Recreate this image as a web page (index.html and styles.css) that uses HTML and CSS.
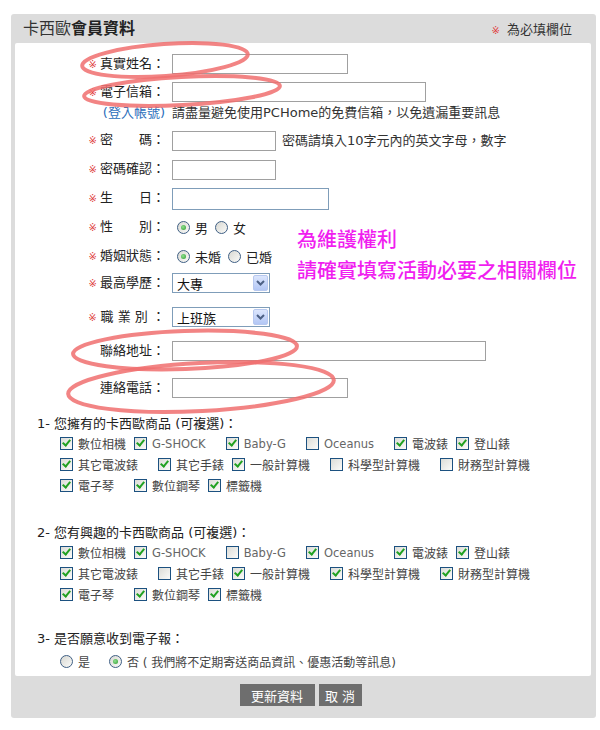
FILE: index.html
```html
<!DOCTYPE html>
<html lang="zh-Hant">
<head>
  <meta charset="UTF-8">
  <title>卡西歐會員資料</title>
  <link rel="stylesheet" href="styles.css">
</head>
<body>
  <div class="page">
    <div class="box">
      <div class="box-head">
        <h1 class="title">卡西歐<b>會員資料</b></h1>
        <span class="note-req"><span class="req">※</span> 為必填欄位</span>
      </div>

      <div class="panel">
        <div class="row r-top">
          <label class="lbl"><span class="req">※</span>真實姓名：</label>
          <input class="txt w-name" type="text">
        </div>
        <div class="row r-top">
          <label class="lbl"><span class="req">※</span>電子信箱：</label>
          <input class="txt w-mail" type="text">
        </div>
        <div class="row r-hint">
          <span class="lbl login">(登入帳號)</span>
          <span class="hint">請盡量避免使用PCHome的免費信箱，以免遺漏重要訊息</span>
        </div>
        <div class="row">
          <label class="lbl"><span class="req">※</span>密　　碼：</label>
          <input class="txt w-pass" type="password">
          <span class="hint pass-hint">密碼請填入10字元內的英文字母，數字</span>
        </div>
        <div class="row">
          <label class="lbl"><span class="req">※</span>密碼確認：</label>
          <input class="txt w-pass" type="password">
        </div>
        <div class="row">
          <label class="lbl"><span class="req">※</span>生　　日：</label>
          <input class="txt w-date" type="text">
        </div>
        <div class="row">
          <label class="lbl"><span class="req">※</span>性　　別：</label>
          <span class="choice"><span class="rd on"></span>男</span>
          <span class="choice"><span class="rd"></span>女</span>
        </div>
        <div class="row">
          <label class="lbl"><span class="req">※</span>婚姻狀態：</label>
          <span class="choice"><span class="rd on"></span>未婚</span>
          <span class="choice"><span class="rd"></span>已婚</span>
        </div>
        <div class="row r-edu">
          <label class="lbl"><span class="req">※</span>最高學歷：</label>
          <div class="sel">大專<span class="sel-btn"><svg width="9" height="6" viewBox="0 0 9 6"><path d="M1 1 L4.5 4.5 L8 1" fill="none" stroke="#4d6185" stroke-width="2"/></svg></span></div>
        </div>
        <div class="row r-job">
          <label class="lbl"><span class="req job-req">※</span>職 業 別 ：</label>
          <div class="sel">上班族<span class="sel-btn"><svg width="9" height="6" viewBox="0 0 9 6"><path d="M1 1 L4.5 4.5 L8 1" fill="none" stroke="#4d6185" stroke-width="2"/></svg></span></div>
        </div>
        <div class="row r-addr">
          <label class="lbl">聯絡地址：</label>
          <input class="txt w-addr" type="text">
        </div>
        <div class="row r-tel">
          <label class="lbl">連絡電話：</label>
          <input class="txt w-name" type="text">
        </div>

        <div class="sec sec-1">
          <h2 class="sec-title">1- 您擁有的卡西歐商品 (可複選)：</h2>
          <div class="opts">
            <div class="opt-row">
              <span class="opt"><span class="cb on"></span>數位相機</span>
              <span class="opt wide latin"><span class="cb on"></span>G-SHOCK</span>
              <span class="opt wide latin"><span class="cb on"></span>Baby-G</span>
              <span class="opt wide latin"><span class="cb"></span>Oceanus</span>
              <span class="opt"><span class="cb on"></span>電波錶</span>
              <span class="opt"><span class="cb on"></span>登山錶</span>
            </div>
            <div class="opt-row">
              <span class="opt wide"><span class="cb on"></span>其它電波錶</span>
              <span class="opt"><span class="cb on"></span>其它手錶</span>
              <span class="opt wide"><span class="cb on"></span>一般計算機</span>
              <span class="opt wide"><span class="cb"></span>科學型計算機</span>
              <span class="opt"><span class="cb"></span>財務型計算機</span>
            </div>
            <div class="opt-row">
              <span class="opt wide"><span class="cb on"></span>電子琴</span>
              <span class="opt"><span class="cb on"></span>數位鋼琴</span>
              <span class="opt"><span class="cb on"></span>標籤機</span>
            </div>
          </div>
        </div>

        <div class="sec sec-2">
          <h2 class="sec-title">2- 您有興趣的卡西歐商品 (可複選)：</h2>
          <div class="opts">
            <div class="opt-row">
              <span class="opt"><span class="cb on"></span>數位相機</span>
              <span class="opt wide latin"><span class="cb on"></span>G-SHOCK</span>
              <span class="opt wide latin"><span class="cb"></span>Baby-G</span>
              <span class="opt wide latin"><span class="cb on"></span>Oceanus</span>
              <span class="opt"><span class="cb on"></span>電波錶</span>
              <span class="opt"><span class="cb on"></span>登山錶</span>
            </div>
            <div class="opt-row">
              <span class="opt wide"><span class="cb on"></span>其它電波錶</span>
              <span class="opt"><span class="cb"></span>其它手錶</span>
              <span class="opt wide"><span class="cb on"></span>一般計算機</span>
              <span class="opt wide"><span class="cb on"></span>科學型計算機</span>
              <span class="opt"><span class="cb on"></span>財務型計算機</span>
            </div>
            <div class="opt-row">
              <span class="opt wide"><span class="cb on"></span>電子琴</span>
              <span class="opt"><span class="cb on"></span>數位鋼琴</span>
              <span class="opt"><span class="cb on"></span>標籤機</span>
            </div>
          </div>
        </div>

        <div class="sec sec-3">
          <h2 class="sec-title">3- 是否願意收到電子報：</h2>
          <div class="opts news">
            <span class="opt yes"><span class="rd"></span>是</span>
            <span class="opt"><span class="rd on"></span>否 ( 我們將不定期寄送商品資訊、優惠活動等訊息)</span>
          </div>
        </div>
      </div>

      <div class="actions">
        <button class="btn btn-save" type="button">更新資料</button>
        <button class="btn btn-cancel" type="button">取 消</button>
      </div>
    </div>

    <!-- annotations drawn over the form -->
    <svg class="marks" width="600" height="730" viewBox="0 0 600 730">
      <ellipse cx="165" cy="60" rx="83" ry="16" transform="rotate(-4 165 60)"/>
      <ellipse cx="182" cy="91" rx="98" ry="14" transform="rotate(-3 182 91)"/>
      <ellipse cx="185" cy="350" rx="112" ry="19" transform="rotate(-2 185 350)"/>
      <ellipse cx="201" cy="387" rx="133" ry="24" transform="rotate(-3 201 387)"/>
    </svg>
    <div class="callout">為維護權利<br>請確實填寫活動必要之相關欄位</div>
  </div>
</body>
</html>
```

FILE: styles.css
```css
body {
  margin: 0;
  font-family: "DejaVu Sans", "Noto Sans CJK TC", sans-serif;
  color: #222;
  background: #fff;
}

.page {
  position: relative;
  width: 600px;
  height: 730px;
  padding-top: 14px;
  box-sizing: border-box;
}

.box {
  margin-left: 11px;
  width: 585px;
  background: #dcdcdc;
  border-radius: 3px;
}

.box-head {
  display: flex;
  justify-content: space-between;
  align-items: center;
  height: 29px;
  padding: 0 24px 0 12px;
}

.title {
  margin: 0;
  font-size: 16px;
  font-weight: normal;
  line-height: 20px;
  color: #333;
}

.title b {
  font-weight: bold;
  color: #222;
}

.note-req {
  font-size: 13px;
  color: #333;
}

.req {
  color: #e03c3c;
  font-size: 10px;
  margin-right: 3px;
}

.panel {
  margin: 0 5px 0 4px;
  padding: 7px 0 5px;
  background: #fff;
  border-radius: 2px;
}

.row {
  display: flex;
  align-items: center;
  height: 29px;
  font-size: 13px;
}

.r-top { height: 28px; }
.r-hint { height: 14px; margin-bottom: 6px; }
.r-edu { height: 22px; margin-top: 1px; }
.r-job { height: 22px; margin-top: 12px; }
.r-addr { height: 22px; margin-top: 12px; }
.r-tel { height: 22px; margin-top: 15px; }

.lbl {
  width: 150px;
  margin-right: 7px;
  flex: none;
  text-align: right;
  line-height: 16px;
  color: #222;
}

.job-req {
  margin-right: 4px;
}

.login {
  color: #2a6ebb;
}

.hint {
  color: #333;
  line-height: 16px;
}

.pass-hint {
  margin-left: 6px;
}

.txt {
  height: 20px;
  box-sizing: border-box;
  margin: 0;
  padding: 0 3px;
  border: 1px solid #a0a0a0;
  font: inherit;
}

.w-name { width: 176px; }
.w-mail { width: 254px; }
.w-pass { width: 104px; }
.w-date { width: 157px; height: 22px; border-color: #7f9db9; }
.w-addr { width: 314px; }

.choice {
  display: flex;
  align-items: center;
  gap: 5px;
  margin-left: 5px;
  margin-right: 2px;
  color: #222;
}

/* fake xp style radios and checkboxes */
.rd {
  position: relative;
  width: 13px;
  height: 13px;
  flex: none;
  box-sizing: border-box;
  border: 1px solid #3f5f84;
  border-radius: 50%;
  background: linear-gradient(135deg, #d8d8d2, #fafaf8);
}

.rd.on::after {
  content: "";
  position: absolute;
  left: 3px;
  top: 3px;
  width: 5px;
  height: 5px;
  border-radius: 50%;
  background: radial-gradient(circle at 40% 40%, #8fe08f, #2d9a2d);
}

.cb {
  position: relative;
  width: 13px;
  height: 13px;
  flex: none;
  box-sizing: border-box;
  border: 1px solid #1c5180;
  background: linear-gradient(135deg, #dcdcd7, #fbfbf9);
}

.cb.on::after {
  content: "";
  position: absolute;
  left: 3px;
  top: 0;
  width: 3px;
  height: 6px;
  border: solid #21a121;
  border-width: 0 2px 2px 0;
  transform: rotate(40deg);
}

.sel {
  display: flex;
  justify-content: space-between;
  align-items: center;
  width: 98px;
  height: 20px;
  box-sizing: border-box;
  padding: 0 1px 0 4px;
  border: 1px solid #7f9db9;
  font-size: 13px;
  color: #111;
}

.sel-btn {
  display: flex;
  justify-content: center;
  align-items: center;
  width: 15px;
  height: 16px;
  box-sizing: border-box;
  border: 1px solid #b7c8ef;
  border-radius: 2px;
  background: linear-gradient(#dce6fd, #b3c7f5);
}

.sec {
  padding-left: 22px;
}

.sec-1 { margin-top: 16px; }
.sec-2 { margin-top: 28px; }
.sec-3 { margin-top: 25px; }

.sec-title {
  margin: 0;
  font-size: 13px;
  font-weight: normal;
  line-height: 18px;
  color: #222;
}

.opts {
  padding-left: 23px;
}

.opt-row {
  display: flex;
  align-items: center;
  height: 21px;
}

.opt {
  display: flex;
  align-items: center;
  gap: 5px;
  margin-right: 8px;
  font-size: 12px;
  color: #444;
}

.opt.wide {
  margin-right: 20px;
}

.opt.latin {
  font-size: 11.5px;
  color: #666;
}

.news {
  display: flex;
  align-items: center;
  height: 20px;
  margin-top: 3px;
}

.news .yes {
  margin-right: 19px;
}

.actions {
  display: flex;
  justify-content: center;
  gap: 4px;
  padding: 8px 6px 12px 0;
}

.btn {
  height: 22px;
  border: none;
  padding: 0;
  background: #6e6e6e;
  color: #fff;
  font: 13px "DejaVu Sans", "Noto Sans CJK TC", sans-serif;
  cursor: pointer;
}

.btn-save { width: 75px; }
.btn-cancel { width: 43px; }

.marks {
  position: absolute;
  top: 0;
  left: 0;
  pointer-events: none;
}

.marks ellipse {
  fill: none;
  stroke: rgba(240, 110, 110, 0.85);
  stroke-width: 4;
}

.callout {
  position: absolute;
  left: 297px;
  top: 223px;
  font-family: "Noto Sans CJK TC", sans-serif;
  font-size: 20px;
  font-weight: 500;
  line-height: 31px;
  color: #f01ef0;
}
```
